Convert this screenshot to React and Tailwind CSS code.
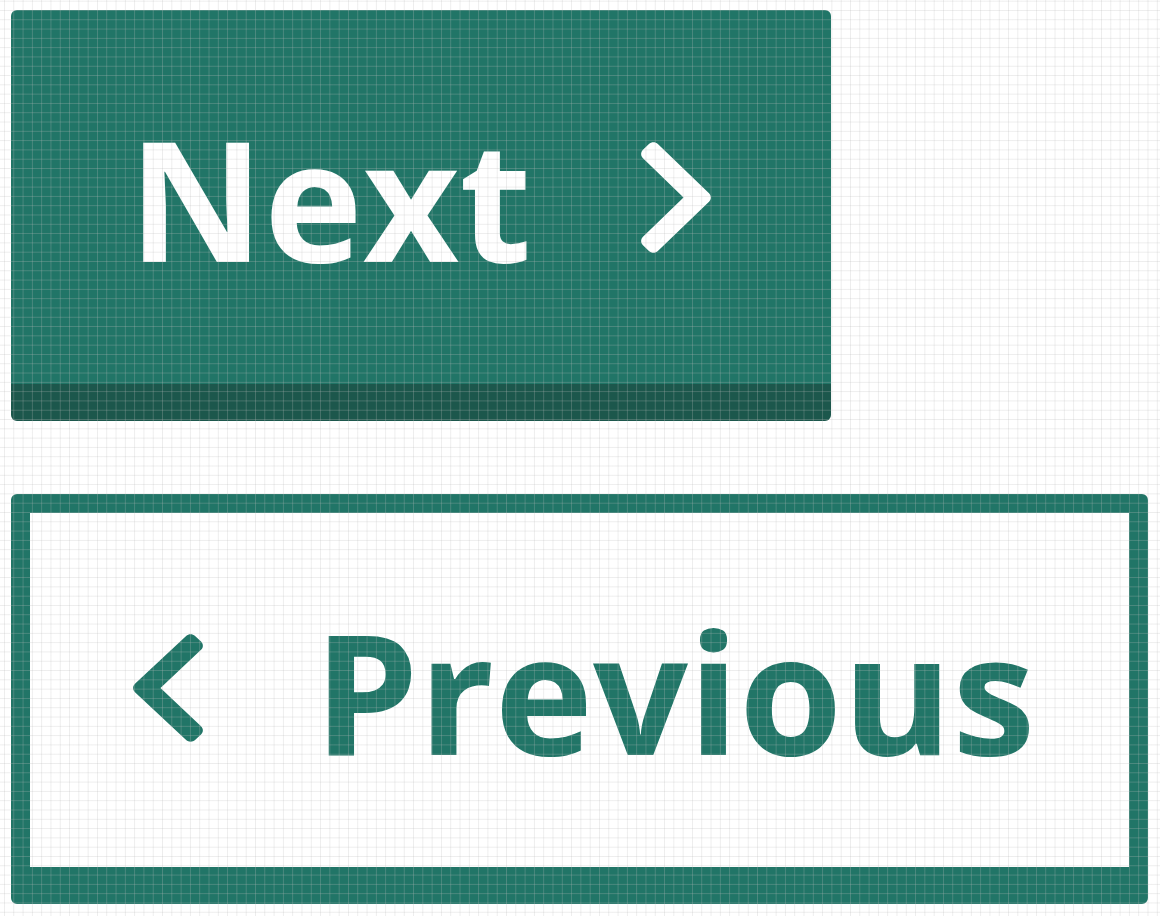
const RIGHT =
  "M285.476 272.971L91.132 467.314c-9.373 9.373-24.569 9.373-33.941 0l-22.667-22.667c-9.357-9.357-9.375-24.522-.04-33.901L188.505 256 34.484 101.255c-9.335-9.379-9.317-24.544.04-33.901l22.667-22.667c9.373-9.373 24.569-9.373 33.941 0L285.475 239.03c9.373 9.372 9.373 24.568.001 33.941z";
const LEFT =
  "M34.52 239.03L228.87 44.69c9.37-9.37 24.57-9.37 33.94 0l22.67 22.67c9.36 9.36 9.37 24.52.04 33.9L131.49 256l154.02 154.75c9.34 9.38 9.32 24.54-.04 33.9l-22.67 22.67c-9.37 9.37-24.57 9.37-33.94 0L34.52 272.97c-9.37-9.37-9.37-24.57 0-33.94z";

function Chevron({ d, className }) {
  return (
    <svg
      viewBox="27 37 266 438"
      preserveAspectRatio="none"
      className={className}
      fill="currentColor"
      aria-hidden="true"
    >
      <path d={d} />
    </svg>
  );
}

export default function App() {
  return (
    <div className="relative w-[1160px] h-[916px] overflow-hidden bg-white">
      <div className="flex flex-col items-start gap-[73px] pt-[10px] pl-[11px]">
        <button className="flex w-[820px] h-[411px] items-center justify-center rounded-[6px] border-b-[37px] border-[#1c574c] bg-[#217567] pr-[3px] text-white">
          <span className="font-['Open_Sans',sans-serif] text-[167px] font-bold leading-none">
            Next
          </span>
          <Chevron d={RIGHT} className="ml-[109px] w-[70px] h-[111px]" />
        </button>
        <button className="flex w-[1137px] h-[410px] items-center justify-center rounded-[6px] border-[19px] border-b-[37px] border-[#217567] bg-white pl-[9px] text-[#217567]">
          <Chevron d={LEFT} className="mr-[111px] mb-[4px] w-[70px] h-[108px]" />
          <span className="font-['Open_Sans',sans-serif] text-[167px] font-bold leading-none">
            Previous
          </span>
        </button>
      </div>
      <div className="pointer-events-none absolute inset-0 bg-[linear-gradient(to_right,rgba(190,190,190,0.28)_1px,transparent_1px),linear-gradient(to_bottom,rgba(190,190,190,0.28)_1px,transparent_1px)] bg-[size:9.31px_9.31px] bg-[position:4px_0.7px]" />
    </div>
  );
}
